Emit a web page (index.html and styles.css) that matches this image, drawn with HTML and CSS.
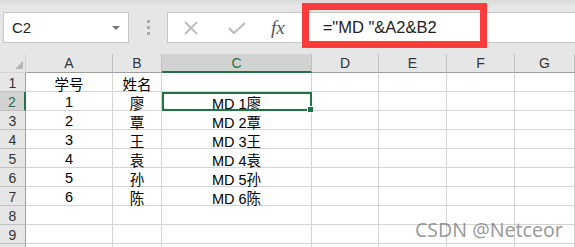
FILE: index.html
```html
<!DOCTYPE html>
<html lang="zh">
<head>
    <meta charset="UTF-8">
    <title>Excel 公式</title>
    <link rel="stylesheet" href="styles.css">
</head>
<body>

    <div class="toolbar">
        <div class="name-box">
            <span>C2</span>
            <span class="drop"></span>
        </div>
        <div class="grip"><i></i><i></i><i></i></div>
        <div class="formula-box">
            <svg class="ico" width="16" height="14" viewBox="0 0 16 14">
                <path d="M2 1 L14 13 M14 1 L2 13" stroke="#bdbdbd" stroke-width="2" fill="none"/>
            </svg>
            <svg class="ico check" width="18" height="12" viewBox="0 0 18 12">
                <path d="M1 6 L6 11 L17 1" stroke="#bdbdbd" stroke-width="2.2" fill="none"/>
            </svg>
            <span class="fx">fx</span>
            <span class="formula">="MD "&amp;A2&amp;B2</span>
        </div>
        <div class="highlight"></div>
    </div>

    <div class="sheet">
        <div class="corner"></div>
        <div class="colhead">A</div>
        <div class="colhead">B</div>
        <div class="colhead active">C</div>
        <div class="colhead">D</div>
        <div class="colhead">E</div>
        <div class="colhead">F</div>
        <div class="colhead">G</div>

        <div class="rowhead">1</div>
        <div class="cell">学号</div>
        <div class="cell">姓名</div>
        <div class="cell"></div>
        <div class="cell"></div><div class="cell"></div><div class="cell"></div><div class="cell"></div>

        <div class="rowhead active">2</div>
        <div class="cell">1</div>
        <div class="cell">廖</div>
        <div class="cell sel">MD 1廖</div>
        <div class="cell"></div><div class="cell"></div><div class="cell"></div><div class="cell"></div>

        <div class="rowhead">3</div>
        <div class="cell">2</div>
        <div class="cell">覃</div>
        <div class="cell">MD 2覃</div>
        <div class="cell"></div><div class="cell"></div><div class="cell"></div><div class="cell"></div>

        <div class="rowhead">4</div>
        <div class="cell">3</div>
        <div class="cell">王</div>
        <div class="cell">MD 3王</div>
        <div class="cell"></div><div class="cell"></div><div class="cell"></div><div class="cell"></div>

        <div class="rowhead">5</div>
        <div class="cell">4</div>
        <div class="cell">袁</div>
        <div class="cell">MD 4袁</div>
        <div class="cell"></div><div class="cell"></div><div class="cell"></div><div class="cell"></div>

        <div class="rowhead">6</div>
        <div class="cell">5</div>
        <div class="cell">孙</div>
        <div class="cell">MD 5孙</div>
        <div class="cell"></div><div class="cell"></div><div class="cell"></div><div class="cell"></div>

        <div class="rowhead">7</div>
        <div class="cell">6</div>
        <div class="cell">陈</div>
        <div class="cell">MD 6陈</div>
        <div class="cell"></div><div class="cell"></div><div class="cell"></div><div class="cell"></div>

        <div class="rowhead">8</div>
        <div class="cell"></div><div class="cell"></div><div class="cell"></div>
        <div class="cell"></div><div class="cell"></div><div class="cell"></div><div class="cell"></div>

        <div class="rowhead">9</div>
        <div class="cell"></div><div class="cell"></div><div class="cell"></div>
        <div class="cell"></div><div class="cell"></div><div class="cell"></div><div class="cell"></div>

        <div class="rowhead"></div>
        <div class="cell"></div><div class="cell"></div><div class="cell"></div>
        <div class="cell"></div><div class="cell"></div><div class="cell"></div><div class="cell"></div>
    </div>

    <div class="watermark">CSDN @Netceor</div>

</body>
</html>
```

FILE: styles.css
```css
body {
    margin: 0;
    width: 575px;
    height: 247px;
    overflow: hidden;
    position: relative;
    background-color: #ffffff;
    font-family: 'Liberation Sans', Arial, 'Noto Sans CJK SC', sans-serif;
    color: #000;
}

.toolbar {
    position: relative;
    display: flex;
    align-items: flex-start;
    height: 54px;
    padding-top: 12px;
    box-sizing: border-box;
    background: linear-gradient(#d9d9d9 0px, #e6e6e6 6px, #e6e6e6 100%);
}

.name-box {
    display: flex;
    align-items: center;
    justify-content: space-between;
    margin-left: 3px;
    width: 126px;
    height: 31px;
    box-sizing: border-box;
    padding: 0 8px 0 8px;
    background-color: #fff;
    border: 1px solid #c6c6c6;
    font-size: 15px;
    color: #222;
}

.drop {
    width: 0;
    height: 0;
    border-left: 4px solid transparent;
    border-right: 4px solid transparent;
    border-top: 4px solid #777;
}

.grip {
    display: flex;
    flex-direction: column;
    gap: 3px;
    margin: 8px 17px 0 18px;
}

.grip i {
    width: 3px;
    height: 3px;
    background-color: #a8a8a8;
}

.formula-box {
    display: flex;
    align-items: center;
    flex: 1;
    height: 31px;
    box-sizing: border-box;
    padding-left: 15px;
    background-color: #fff;
    border: 1px solid #c6c6c6;
    border-right: none;
}

.ico.check {
    margin-left: 29px;
}

.fx {
    margin-left: 25px;
    font-family: 'Liberation Serif', 'Times New Roman', serif;
    font-style: italic;
    font-size: 19px;
    color: #555;
}

.formula {
    margin-left: 38px;
    font-size: 16.5px;
    color: #222;
    white-space: pre;
}

.highlight {
    position: absolute;
    left: 302px;
    top: 3px;
    width: 185px;
    height: 45px;
    box-sizing: border-box;
    border: 7px solid #fd3b3b;
}

.sheet {
    display: grid;
    grid-template-columns: 26px 87px 49px 150px 67px 68px 68px 60px;
    grid-auto-rows: 19px;
    font-size: 14.5px;
}

.sheet > div {
    box-sizing: border-box;
    border-right: 1px solid #d4d4d4;
    border-bottom: 1px solid #d4d4d4;
    display: flex;
    align-items: center;
    justify-content: center;
    padding-top: 2px;
    white-space: nowrap;
}

.corner {
    position: relative;
    background-color: #e6e6e6;
}

.corner::after {
    content: "";
    position: absolute;
    right: 2px;
    bottom: 3px;
    width: 0;
    height: 0;
    border-left: 8px solid transparent;
    border-bottom: 8px solid #b5b5b5;
}

.sheet .colhead {
    background-color: #e6e6e6;
    border-right-color: #c0c0c0;
    border-bottom-color: #9f9f9f;
    color: #333;
    font-size: 14px;
    padding-top: 0;
}

.sheet .colhead.active {
    background-color: #d2d2d2;
    border-bottom: 2px solid #217346;
    color: #217346;
}

.sheet .rowhead {
    background-color: #e6e6e6;
    border-right-color: #9f9f9f;
    border-bottom-color: #c0c0c0;
    color: #333;
    font-size: 14px;
}

.sheet .rowhead.active {
    background-color: #d2d2d2;
    border-right: 2px solid #217346;
    color: #217346;
}

.sel {
    position: relative;
    outline: 2px solid #217346;
    outline-offset: -2px;
}

.sel::after {
    content: "";
    position: absolute;
    right: -3px;
    bottom: -3px;
    width: 5px;
    height: 5px;
    background-color: #217346;
    border: 1px solid #fff;
}

.watermark {
    position: absolute;
    left: 415px;
    top: 216px;
    font-family: 'Noto Sans', sans-serif;
    font-size: 19.5px;
    color: rgba(110, 110, 110, 0.7);
}
```
